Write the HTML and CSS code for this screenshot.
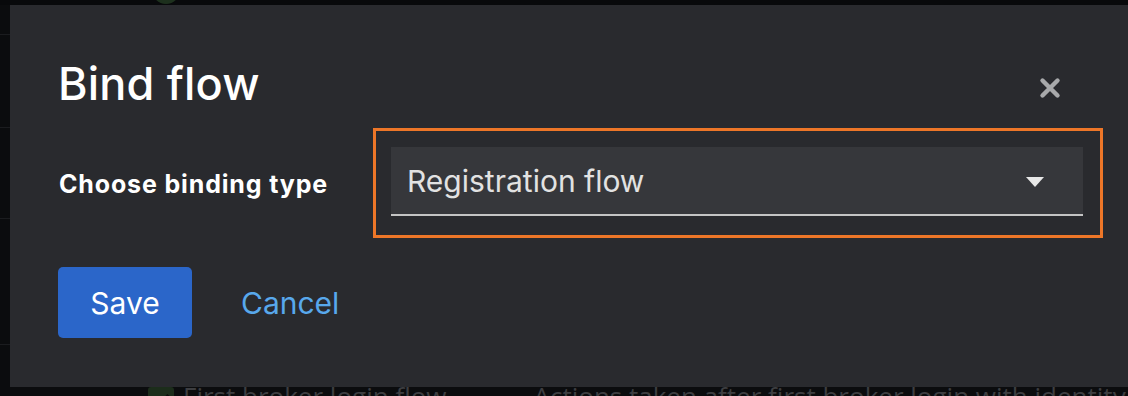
FILE: index.html
```html
<!DOCTYPE html>
<html>
<head>
<meta charset="utf-8">
<link rel="stylesheet" href="styles.css">
</head>
<body>
<div class="page">
  <div class="topbar"><span class="avatar"></span></div>
  <div class="row r1"></div>
  <div class="row r2"></div>
  <div class="row r3"></div>
  <div class="row r4"></div>
  <div class="row r5">
    <span class="cell-name">
      <svg class="check" viewBox="0 0 26 26" width="26" height="26"><rect x="0" y="0" width="26" height="26" rx="3" fill="#1c2d1b"/><path d="M6 13.5l5 5L20.5 8" fill="none" stroke="#0c0d0c" stroke-width="3.2"/></svg>
      <span>First broker login flow</span>
    </span>
    <span class="cell-desc">Actions taken after first broker login with identity provider</span>
  </div>
</div>

<div class="modal" role="dialog">
  <header class="modal-header">
    <h1 class="modal-title">Bind flow</h1>
    <button class="close" aria-label="Close">
      <svg viewBox="0 0 22 22" width="22" height="22"><path d="M3.5 3.5L18.5 18.5M18.5 3.5L3.5 18.5" stroke="#a8a9ab" stroke-width="4.4" stroke-linecap="round"/></svg>
    </button>
  </header>
  <div class="form-row">
    <label class="form-label">Choose binding type</label>
    <div class="highlight">
      <div class="select">
        <span class="select-text">Registration flow</span>
        <svg class="caret" viewBox="0 0 18 10" width="18" height="10"><path d="M0 0h18l-9 10z" fill="#e8e8e8"/></svg>
      </div>
    </div>
  </div>
  <div class="actions">
    <button class="btn-primary">Save</button>
    <button class="btn-link">Cancel</button>
  </div>
</div>
</body>
</html>
```
FILE: styles.css
```css
html, body {
  margin: 0;
  padding: 0;
}
body {
  width: 1128px;
  height: 396px;
  overflow: hidden;
  background: #0b0c0e;
  font-family: "Inter", "Liberation Sans", sans-serif;
  position: relative;
}
.page {
  display: flex;
  flex-direction: column;
  width: 1128px;
  height: 396px;
  overflow: hidden;
}
.topbar {
  height: 5px;
  flex: none;
  background: #08090b;
  position: relative;
  overflow: hidden;
}
.avatar {
  position: absolute;
  left: 152px;
  top: -24px;
  width: 28px;
  height: 28px;
  border-radius: 50%;
  background: #1d301d;
}
.row {
  border-top: 1px solid #1b1c1f;
  box-sizing: border-box;
  flex: none;
}
.r1 { height: 29px; border-top: 0; }
.r2 { height: 93px; }
.r3 { height: 91px; }
.r4 { height: 126px; }
.r5 {
  height: 52px;
  display: flex;
  align-items: flex-start;
  font-family: "Open Sans", sans-serif;
  font-size: 26px;
  line-height: 1;
  color: #3d3e41;
  padding-top: 38px;
  white-space: nowrap;
  overflow: hidden;
}
.cell-name {
  display: flex;
  align-items: flex-start;
  gap: 9px;
  margin-left: 148px;
  flex: none;
}
.check {
  display: block;
  margin-top: 4px;
}
.cell-desc {
  margin-left: 87px;
  flex: 1;
  min-width: 0;
  overflow: hidden;
}

.modal {
  position: absolute;
  left: 10px;
  top: 5px;
  width: 1118px;
  height: 382px;
  background: #292a2e;
  box-sizing: border-box;
  padding: 0 0 0 48px;
  display: flex;
  flex-direction: column;
}
.modal-header {
  display: flex;
  align-items: center;
  justify-content: space-between;
  padding-top: 52px;
  padding-right: 67px;
}
.modal-title {
  margin: 0;
  font-family: "Inter", sans-serif;
  font-weight: 500;
  font-size: 45px;
  line-height: 54px;
  color: #ffffff;
  letter-spacing: 0.2px;
}
.close {
  background: none;
  border: 0;
  padding: 0;
  width: 22px;
  height: 22px;
  margin-top: 8px;
}
.close svg { display: block; }
.form-row {
  display: flex;
  align-items: center;
  margin-top: 17px;
}
.form-label {
  width: 314px;
  font-weight: 700;
  font-size: 25px;
  letter-spacing: 0.85px;
  color: #ffffff;
  padding-left: 1px;
  margin-top: 2px;
}
.highlight {
  border: 3px solid #ed7628;
  padding: 16px 17px 19px 15px;
  width: 692px;
}
.select {
  height: 69px;
  box-sizing: border-box;
  background: #36373b;
  border-bottom: 2px solid #c4c4c4;
  display: flex;
  align-items: center;
  justify-content: space-between;
  padding: 0 39px 0 16px;
}
.select-text {
  font-size: 30px;
  color: #e2e2e2;
  margin-top: 1px;
}
.caret { display: block; margin-top: 3px; }
.actions {
  display: flex;
  align-items: center;
  margin-top: 29px;
  gap: 49px;
}
.btn-primary {
  width: 134px;
  height: 71px;
  border: 0;
  border-radius: 5px;
  background: #2b66c9;
  color: #ffffff;
  font-family: "Inter", sans-serif;
  font-size: 30px;
  padding: 0;
}
.btn-link {
  border: 0;
  background: none;
  padding: 0;
  color: #58a8ec;
  font-family: "Inter", sans-serif;
  font-size: 30px;
}
```
